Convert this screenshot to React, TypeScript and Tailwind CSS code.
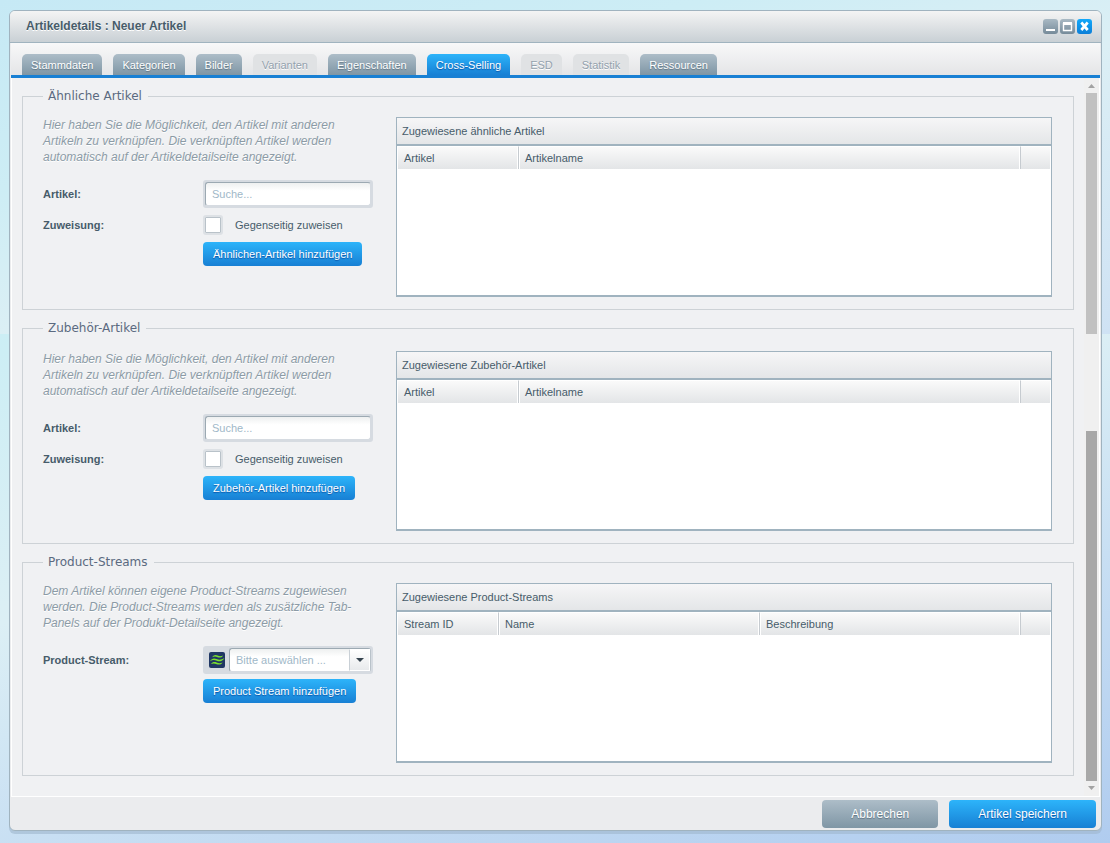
// App.tsx
import type { ReactNode } from 'react';

interface Tab {
  label: string;
  disabled?: boolean;
}

interface Column {
  label: string;
  width?: string;
}

const tabs: Tab[] = [
  { label: 'Stammdaten' },
  { label: 'Kategorien' },
  { label: 'Bilder' },
  { label: 'Varianten', disabled: true },
  { label: 'Eigenschaften' },
  { label: 'Cross-Selling' },
  { label: 'ESD', disabled: true },
  { label: 'Statistik', disabled: true },
  { label: 'Ressourcen' },
];

const activeTab = 'Cross-Selling';

const articleColumns: Column[] = [
  { label: 'Artikel', width: 'w-[122px]' },
  { label: 'Artikelname' },
];

const streamColumns: Column[] = [
  { label: 'Stream ID', width: 'w-[102px]' },
  { label: 'Name' },
  { label: 'Beschreibung' },
];

const linkHint =
  'Hier haben Sie die Möglichkeit, den Artikel mit anderen Artikeln zu verknüpfen. Die verknüpften Artikel werden automatisch auf der Artikeldetailseite angezeigt.';

const WindowButton = ({ title, primary, children }: { title: string; primary?: boolean; children: ReactNode }) => (
  <button
    type="button"
    title={title}
    className={`h-[15px] w-[15px] rounded-[3px] bg-linear-to-b ${
      primary ? 'from-[#13a9fb] to-[#0c7fd8]' : 'from-[#a9b9c4] to-[#768b9a]'
    }`}
  >
    <svg viewBox="0 0 15 15" className="h-[15px] w-[15px]" fill="none" stroke="#fff" strokeWidth="2">
      {children}
    </svg>
  </button>
);

const TitleBar = () => (
  <header className="flex h-8 items-center justify-between rounded-t-[5px] border-b border-[#a0b3bf] bg-linear-to-b from-[#f4f4f4] to-[#c9d0d5] pr-[9px] pl-4">
    <h1 className="pb-[2px] text-[12px] leading-4 font-bold text-[#475c6a] [text-shadow:0_1px_0_#fff]">
      Artikeldetails : Neuer Artikel
    </h1>
    <div className="flex gap-[2px]">
      <WindowButton title="Minimieren">
        <path d="M3 11h9" />
      </WindowButton>
      <WindowButton title="Maximieren">
        <path d="M3 4.500h9" strokeWidth="3" />
        <path d="M3.500 4v7.500h8V4" strokeWidth="1.400" />
      </WindowButton>
      <WindowButton title="Schließen" primary>
        <path d="M4.300 3.500l6.400 7.500M10.700 3.500L4.300 11" strokeWidth="2.700" />
      </WindowButton>
    </div>
  </header>
);

const tabStyle = (tab: Tab) => {
  if (tab.label === activeTab) {
    return 'bg-linear-to-b from-[#2db4fa] to-[#1880d4] text-white [text-shadow:0_1px_1px_#0b55a8]';
  }
  if (tab.disabled) {
    return 'bg-[#e0e2e4] text-[#93a1ad] [text-shadow:0_1px_0_#fff]';
  }
  return 'bg-linear-to-b from-[#adbdc8] to-[#7f96a5] text-white [text-shadow:0_1px_1px_#5f7482]';
};

const TabBar = () => (
  <nav className="mx-px flex h-[35px] items-end gap-[11px] border-b-3 border-[#1880d4] bg-linear-to-b from-[#f8f8f9] to-[#e4e5e7] pl-[11px]">
    {tabs.map((tab) => (
      <button
        key={tab.label}
        type="button"
        disabled={tab.disabled}
        className={`h-[21px] rounded-t-[5px] px-[9px] text-[11px] ${tabStyle(tab)}`}
      >
        {tab.label}
      </button>
    ))}
  </nav>
);

const AddButton = ({ children }: { children: ReactNode }) => (
  <button
    type="button"
    className="h-6 rounded-[4px] bg-linear-to-b from-[#2db4fa] to-[#1880d4] px-[10px] text-[11px] text-white [text-shadow:0_1px_1px_#0b55a8]"
  >
    {children}
  </button>
);

const FieldRow = ({ label, htmlFor, children }: { label: string; htmlFor: string; children: ReactNode }) => (
  <div className="flex items-center">
    <label htmlFor={htmlFor} className="w-40 font-bold">
      {label}
    </label>
    {children}
  </div>
);

const ArticleForm = ({ id, button }: { id: string; button: string }) => (
  <div className="flex flex-col gap-[5px]">
    <FieldRow label="Artikel:" htmlFor={`${id}-search`}>
      <div className="w-[170px] rounded-[3px] bg-[#d6dbe1] p-[2px]">
        <input
          id={`${id}-search`}
          type="text"
          placeholder="Suche..."
          className="h-6 w-full rounded-[3px] border border-t-[#9ca9b2] border-r-[#d6dbe1] border-b-[#d6dbe1] border-l-[#9ca9b2] bg-linear-to-b from-[#eef0f0] to-white to-35% px-[6px] outline-none placeholder:text-[#9fb8c8]"
        />
      </div>
    </FieldRow>
    <FieldRow label="Zuweisung:" htmlFor={`${id}-mutual`}>
      <div className="flex h-6 items-center gap-3">
        <input
          id={`${id}-mutual`}
          type="checkbox"
          className="h-5 w-5 appearance-none rounded-[3px] border-2 border-[#dde1e5] bg-white shadow-[inset_0_0_0_1px_#b9c2c9]"
        />
        <label htmlFor={`${id}-mutual`}>Gegenseitig zuweisen</label>
      </div>
    </FieldRow>
    <div className="pl-40">
      <AddButton>{button}</AddButton>
    </div>
  </div>
);

const StreamIcon = () => (
  <svg viewBox="0 0 16 16" className="h-4 w-4 shrink-0" fill="#7be02e">
    <rect width="16" height="16" rx="2" fill="#203764" />
    <path d="M3.200 5.300C4.600 2.900 6.500 2.500 8.600 3.500c1.900.9 3.300 1 5.500-.1-1.300 2.200-3.400 2.700-5.500 1.800-1.900-.8-3.300-.9-5.400.1z" />
    <path d="M1 9.200c1.700-2.900 4-3.300 6.600-2.200 2.500 1 4.600.9 7.900-1-1.800 3.200-4.800 4-7.700 2.800C5.300 7.800 3.600 7.800 1 9.200z" />
    <path d="M1.800 12.100c1.600-2.200 3.700-2.500 5.900-1.600 2 .9 3.600.9 5.900-.1-1.500 2.200-3.700 2.700-5.900 1.800-2-.8-3.600-.9-5.900-.1z" />
  </svg>
);

const StreamForm = () => (
  <div className="flex flex-col gap-[5px]">
    <FieldRow label="Product-Stream:" htmlFor="stream">
      <div className="flex w-[170px] items-center gap-1 rounded-[3px] bg-[#d6dbe1] py-[2px] pr-[2px] pl-[6px]">
        <StreamIcon />
        <div className="relative h-6 flex-1">
          <select
            id="stream"
            defaultValue=""
            className="h-6 w-full appearance-none rounded-[3px] border border-t-[#9ca9b2] border-r-[#b9c2c9] border-b-[#d6dbe1] border-l-[#9ca9b2] bg-linear-to-b from-[#eef0f0] to-white to-35% px-[6px] text-[#9fb8c8] outline-none"
          >
            <option value="">Bitte auswählen ...</option>
          </select>
          <span className="pointer-events-none absolute top-px right-px bottom-px flex w-[21px] items-center justify-center border border-white border-l-[#c9d0d6] bg-linear-to-b from-white to-[#e8eaec]">
            <svg viewBox="0 0 8 4" className="h-1 w-2" fill="#36444f">
              <path d="M0 0h8L4 4z" />
            </svg>
          </span>
        </div>
      </div>
    </FieldRow>
    <div className="pl-40">
      <AddButton>Product Stream hinzufügen</AddButton>
    </div>
  </div>
);

const GridPanel = ({ title, columns }: { title: string; columns: Column[] }) => (
  <div className="h-[180px] flex-1 border border-b-2 border-[#a0b3bf] bg-white">
    <h2 className="flex h-7 items-center border-b-2 border-[#a0b3bf] bg-linear-to-b from-[#f6f6f7] to-[#e4e6e8] px-[5px]">
      {title}
    </h2>
    <table className="w-full table-fixed border-separate border-spacing-0">
      <thead>
        <tr>
          {columns.map((col) => (
            <th
              key={col.label}
              className={`h-[23px] border border-b-0 border-l-0 border-t-white border-r-[#c6cbd0] bg-linear-to-b from-[#fafafa] to-[#e3e5e7] px-[6px] text-left font-normal shadow-[inset_1px_0_0_#fff,inset_-1px_0_0_#fff] first:pl-[7px] ${col.width ?? ''}`}
            >
              {col.label}
            </th>
          ))}
          <th className="w-[30px] border-t border-r border-white bg-linear-to-b from-[#fafafa] to-[#e3e5e7]" />
        </tr>
      </thead>
    </table>
  </div>
);

interface SectionProps {
  legend: string;
  hint: string;
  panelTitle: string;
  columns: Column[];
  padding?: string;
  children: ReactNode;
}

const Section = ({ legend, hint, panelTitle, columns, padding = 'pt-[13px]', children }: SectionProps) => (
  <fieldset className={`border border-[#cdd2d6] pr-[21px] pb-3 pl-5 ${padding}`}>
    <legend className="pr-[6px] pl-[5px] font-['DejaVu_Sans',sans-serif] text-[12px] leading-4 text-[#5b6a80]">
      {legend}
    </legend>
    <div className="flex">
      <div className="w-[353px] shrink-0">
        <p className="mb-[15px] w-[320px] text-[12px] leading-4 text-[#8c9ba6] italic [text-shadow:0_1px_0_#fff]">{hint}</p>
        {children}
      </div>
      <GridPanel title={panelTitle} columns={columns} />
    </div>
  </fieldset>
);

const ScrollBar = () => (
  <div className="flex w-[15px] flex-col items-center bg-[#f0f0f0]" aria-hidden="true">
    <svg viewBox="0 0 15 15" className="h-[15px] w-[15px]" fill="#a3a3a3">
      <path d="M4 10l3.500-4 3.500 4z" />
    </svg>
    <div className="w-[11px] grow-[241] bg-[#c1c1c1]" />
    <div className="grow-[97]" />
    <div className="w-[11px] grow-[350] bg-[#a8a8a8]" />
    <svg viewBox="0 0 15 15" className="h-[15px] w-[15px]" fill="#a3a3a3">
      <path d="M4 5l3.500 4L11 5z" />
    </svg>
  </div>
);

const App = () => {
  return (
    <main className="min-h-screen bg-[linear-gradient(165deg,#c6e9f5_0%,#cdedf5_30%,#dceff5_54%,#cfe2f4_100%),linear-gradient(165deg,#cceef5_0%,#dceff5_36%,#c8dff3_64%,#b0ccef_100%)] bg-[length:100%_334px,100%_509px] bg-[position:top,bottom] bg-no-repeat pt-[10px] pr-2 pb-3 pl-[9px] font-['Liberation_Sans',Arial,sans-serif] text-[11px] leading-4 text-[#475c6a]">
      <div className="rounded-[6px] border border-[#a0b3bf] bg-[#ebecee] shadow-[0_3px_0_#9fb6cd99]">
        <TitleBar />
        <TabBar />
        <div className="mx-px flex border-x border-b border-white bg-[#f0f1f3]">
          <div className="flex flex-1 flex-col gap-[10px] pt-[10px] pr-[10px] pb-5 pl-[10px]">
            <Section
              legend="Ähnliche Artikel"
              hint={linkHint}
              panelTitle="Zugewiesene ähnliche Artikel"
              columns={articleColumns}
            >
              <ArticleForm id="similar" button="Ähnlichen-Artikel hinzufügen" />
            </Section>
            <Section
              legend="Zubehör-Artikel"
              hint={linkHint}
              panelTitle="Zugewiesene Zubehör-Artikel"
              columns={articleColumns}
              padding="pt-[15px]"
            >
              <ArticleForm id="accessory" button="Zubehör-Artikel hinzufügen" />
            </Section>
            <Section
              legend="Product-Streams"
              hint="Dem Artikel können eigene Product-Streams zugewiesen werden. Die Product-Streams werden als zusätzliche Tab-Panels auf der Produkt-Detailseite angezeigt."
              panelTitle="Zugewiesene Product-Streams"
              columns={streamColumns}
            >
              <StreamForm />
            </Section>
          </div>
          <ScrollBar />
        </div>
        <footer className="flex justify-end gap-[11px] pt-[3px] pr-[5px] pb-[2px]">
          <button
            type="button"
            className="h-7 rounded-[4px] bg-linear-to-b from-[#adbdc8] to-[#7f96a5] px-[29px] text-[12px] text-white [text-shadow:0_1px_1px_#5f7482]"
          >
            Abbrechen
          </button>
          <button
            type="button"
            className="h-7 rounded-[4px] bg-linear-to-b from-[#2db4fa] to-[#1880d4] px-[29px] text-[12px] text-white [text-shadow:0_1px_1px_#0b55a8]"
          >
            Artikel speichern
          </button>
        </footer>
      </div>
    </main>
  );
};

export default App;
